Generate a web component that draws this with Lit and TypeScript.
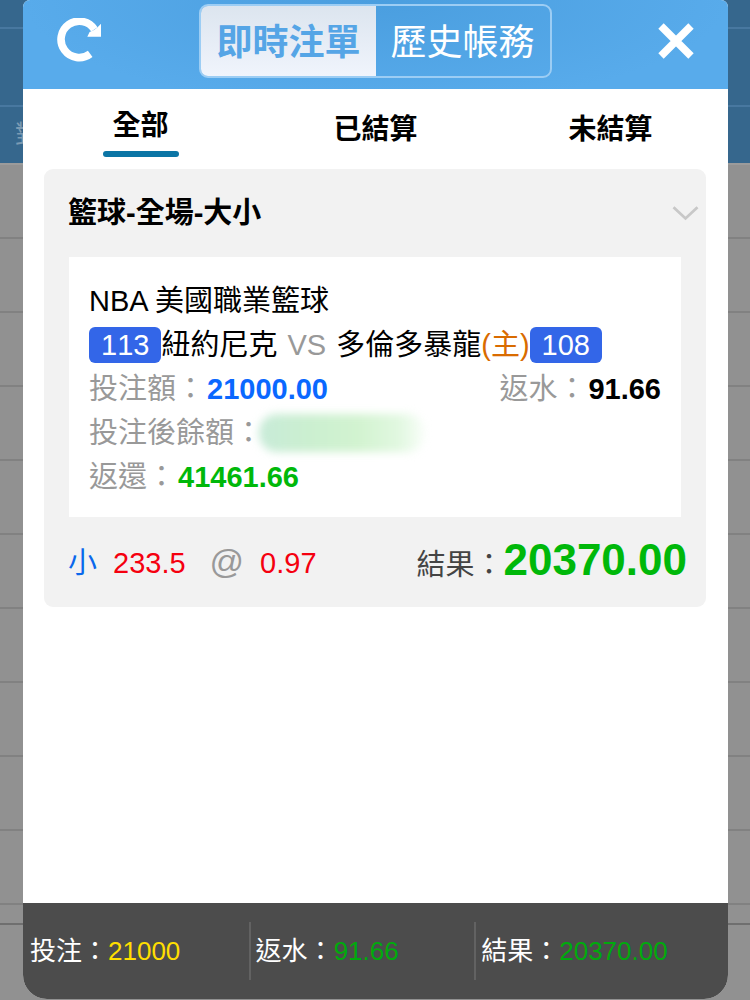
import { LitElement, html, css } from "lit";
import { customElement, property, state } from "lit/decorators.js";
import { classMap } from "lit/directives/class-map.js";

const buttonReset = css`
  button {
    margin: 0;
    padding: 0;
    border: 0;
    background: none;
    color: inherit;
    font: inherit;
    cursor: pointer;
  }
  svg {
    display: block;
  }
`;

/* Dimmed odds table that stays visible at the sides of the dialog. */
@customElement("page-backdrop")
export class PageBackdrop extends LitElement {
  static styles = css`
    :host {
      display: block;
      background: #919191;
      overflow: hidden;
    }
    .bar {
      box-sizing: border-box;
      height: 29px;
      background: #36678d;
      border-bottom: 2px solid #4878a0;
    }
    .bar.tall {
      height: 78px;
    }
    .bar.titles {
      height: 58px;
      padding-left: 15px;
      border-bottom: 2px solid #9b9b9b;
      line-height: 54px;
      font-size: 25px;
      color: #7c9bb3;
    }
    .row {
      box-sizing: border-box;
      height: 74px;
      border-bottom: 2px solid #818181;
    }
    .strip {
      box-sizing: border-box;
      height: 20px;
      border-bottom: 2px solid #6f6f6f;
    }
  `;

  render() {
    return html`
      <div class="bar"></div>
      <div class="bar tall"></div>
      <div class="bar titles">對</div>
      ${Array.from({ length: 10 }, () => html`<div class="row"></div>`)}
      <div class="strip"></div>
    `;
  }
}

@customElement("bet-card")
export class BetCard extends LitElement {
  @state() private open = true;

  static styles = [
    buttonReset,
    css`
      :host {
        display: block;
        background: #f2f2f2;
        border-radius: 9px;
        font-size: 29px;
        line-height: 44px;
        color: #000;
      }
      .head {
        display: flex;
        align-items: center;
        justify-content: space-between;
        height: 88px;
        padding: 0 7px 0 24px;
      }
      h2 {
        margin: 0;
        font-size: 29px;
        font-weight: 700;
      }
      .body {
        margin: 0 25px;
        padding: 22px 20px 18px;
        background: #fff;
      }
      .line {
        display: flex;
        align-items: center;
        min-height: 44px;
        white-space: pre;
      }
      .line b {
        margin-left: 2px;
      }
      .label {
        color: #999;
      }
      .score {
        padding: 0 12px;
        line-height: 36px;
        border-radius: 6px;
        background: #3366e8;
        color: #fff;
        font-kerning: none;
      }
      .versus {
        padding: 0 2px;
        color: #999;
      }
      .home {
        color: #d96b00;
      }
      .right {
        margin-left: auto;
      }
      b {
        font-weight: 700;
      }
      .blue {
        color: #0a68ff;
      }
      .pick {
        color: #0a68ec;
      }
      .green {
        color: #00b80a;
      }
      .red {
        color: #f5000f;
      }
      .hidden-amount {
        width: 166px;
        height: 38px;
        margin-left: -4px;
        border-radius: 18px;
        background: linear-gradient(
          90deg,
          #c8ebd8,
          #cbefd0 30%,
          #d2f3d0 60%,
          #e2f8e1 85%,
          #fafefa
        );
        filter: blur(4px);
      }
      .foot {
        display: flex;
        align-items: center;
        justify-content: space-between;
        min-height: 90px;
        padding: 0 19px 0 24px;
      }
      .odds,
      .result {
        display: flex;
        align-items: baseline;
      }
      .odds {
        gap: 16px;
      }
      .at {
        margin-left: 8px;
        font-size: 34px;
        color: #999;
      }
      .result {
        color: #444;
      }
      .result b {
        font-size: 44px;
      }
    `,
  ];

  render() {
    return html`
      <div class="head">
        <h2>籃球-全場-大小</h2>
        <button
          aria-label="展開"
          aria-expanded=${this.open}
          @click=${() => (this.open = !this.open)}
        >
          <svg width="27" height="16" viewBox="0 0 27 16" fill="none">
            <path d="M1.5 2.2 13.5 13.4 25.5 2.2" stroke="#c8c8c8" stroke-width="2.8" />
          </svg>
        </button>
      </div>
      ${this.open
        ? html`<div class="body">
            <div class="line">NBA 美國職業籃球</div>
            <div class="line"><span class="score">113</span><span>紐約尼克</span><span class="versus"> VS </span><span>多倫多暴龍</span><span class="home">(主)</span><span class="score">108</span></div>
            <div class="line"><span class="label">投注額：</span><b class="blue">21000.00</b><span class="label right">返水：</span><b>91.66</b></div>
            <div class="line"><span class="label">投注後餘額：</span><span class="hidden-amount"></span></div>
            <div class="line"><span class="label">返還：</span><b class="green">41461.66</b></div>
          </div>`
        : null}
      <div class="foot">
        <div class="odds">
          <span class="pick">小</span><span class="red">233.5</span
          ><span class="at">@</span><span class="red">0.97</span>
        </div>
        <div class="result"><span>結果：</span><b class="green">20370.00</b></div>
      </div>
    `;
  }
}

@customElement("total-cell")
export class TotalCell extends LitElement {
  @property() label = "";
  @property() value = "";
  @property({ reflect: true }) tone = "green";

  static styles = css`
    :host {
      display: block;
      box-sizing: border-box;
      padding-left: 7px;
      font-size: 26px;
      line-height: 58px;
      white-space: nowrap;
      color: #fff;
    }
    .value {
      color: #00aa0c;
    }
    :host([tone="yellow"]) .value {
      color: #ffde00;
    }
  `;

  render() {
    return html`<span>${this.label}：</span><span class="value">${this.value}</span>`;
  }
}

@customElement("app-root")
export class AppRoot extends LitElement {
  @state() private view = 0;
  @state() private filter = 0;

  static styles = [
    buttonReset,
    css`
      :host {
        display: grid;
        grid-template: minmax(100vh, auto) / minmax(0, 1fr);
        font-family: "Liberation Sans", "Noto Sans CJK TC", sans-serif;
      }
      page-backdrop,
      .dialog {
        grid-area: 1 / 1;
      }
      page-backdrop {
        height: 0;
        min-height: 100%;
      }
      .dialog {
        z-index: 1;
        display: flex;
        flex-direction: column;
        margin: 0 22px 1px 23px;
        border-radius: 7px 7px 24px 24px;
        background: #fff;
        overflow: hidden;
      }
      header {
        display: flex;
        align-items: center;
        justify-content: space-between;
        box-sizing: border-box;
        height: 89px;
        padding: 0 33px 8px;
        background: radial-gradient(ellipse 50% 120% at 50% 0, #4a9edf, #58abeb);
        color: #fff;
      }
      .icon {
        display: flex;
        justify-content: flex-end;
        width: 46px;
      }
      .segments {
        display: flex;
        border: 2px solid #9ccdf4;
        border-radius: 9px;
        overflow: hidden;
        font-size: 36px;
        line-height: 66px;
      }
      .segments button {
        padding: 4px 15px 0;
      }
      .segments .on {
        background: linear-gradient(#dce5ef, #f0f4fc);
        color: #55a5e6;
        font-weight: 700;
      }
      nav {
        display: grid;
        grid-template-columns: repeat(3, 1fr);
        height: 80px;
        font-size: 28px;
        font-weight: 700;
        color: #000;
      }
      nav button {
        display: flex;
        flex-direction: column;
        align-items: center;
        padding-top: 20px;
      }
      nav .on {
        padding-top: 16px;
      }
      nav .on::after {
        content: "";
        width: 76px;
        height: 6px;
        margin-top: 4px;
        border-radius: 3px;
        background: #0b75a5;
      }
      nav span {
        line-height: 42px;
      }
      main {
        flex: 1;
        padding: 0 22px 0 21px;
      }
      footer {
        display: grid;
        grid-template-columns: 32% 32% 1fr;
        align-items: center;
        height: 96px;
        background: #4c4c4c;
      }
      total-cell + total-cell {
        border-left: 2px solid #626262;
        padding-left: 5px;
      }
    `,
  ];

  render() {
    return html`
      <page-backdrop aria-hidden="true"></page-backdrop>
      <div class="dialog" role="dialog">
        <header>
          <button class="icon" aria-label="重新整理">
            <svg width="46" height="46" viewBox="0 0 46 46">
              <path d="M34.2 35.9A18.2 18.2 0 1 1 38.4 11.3" fill="none" stroke="#fff" stroke-width="7.6" />
              <path d="M45 5.8V18.8H31.3L33.6 14 38 12 41.6 9.2Z" fill="#fff" />
            </svg>
          </button>
          <div class="segments">
            ${["即時注單", "歷史帳務"].map(
              (name, i) => html`<button
                class=${classMap({ on: this.view === i })}
                @click=${() => (this.view = i)}
              >${name}</button>`
            )}
          </div>
          <button class="icon" aria-label="關閉">
            <svg width="38" height="38" viewBox="0 0 38 38">
              <path d="M4 4 34 34M34 4 4 34" fill="none" stroke="#fff" stroke-width="7.6" />
            </svg>
          </button>
        </header>
        <nav>
          ${["全部", "已結算", "未結算"].map(
            (name, i) => html`<button
              class=${classMap({ on: this.filter === i })}
              @click=${() => (this.filter = i)}
            ><span>${name}</span></button>`
          )}
        </nav>
        <main><bet-card></bet-card></main>
        <footer>
          <total-cell label="投注" value="21000" tone="yellow"></total-cell>
          <total-cell label="返水" value="91.66"></total-cell>
          <total-cell label="結果" value="20370.00"></total-cell>
        </footer>
      </div>
    `;
  }
}
